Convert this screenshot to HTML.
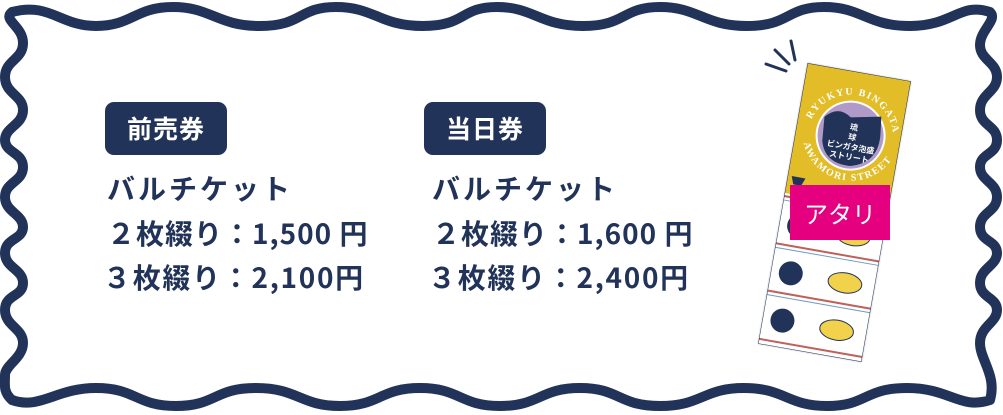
<!DOCTYPE html>
<html><head><meta charset="utf-8"><style>
*{margin:0;padding:0;box-sizing:border-box}
body{width:1003px;height:415px;background:#fff;position:relative;overflow:hidden;font-family:"Liberation Sans","Noto Sans CJK JP",sans-serif;color:#22335a}
.badge{position:absolute;background:#22335a;color:#fff;border-radius:9px;font-family:"Noto Sans CJK JP",sans-serif;font-weight:700;font-size:25px;line-height:53px;text-align:center;letter-spacing:1px}
.t{position:absolute;font-family:"Noto Sans CJK JP",sans-serif;font-weight:700;font-size:28px;line-height:30px;white-space:nowrap;color:#22335a}
</style></head><body>
<svg width="1003" height="415" style="position:absolute;left:0;top:0">
<path fill="none" stroke="#22335a" stroke-width="10" stroke-linejoin="round" d="M12,12 C50,2 60,26 96,26 S135,7 173,7 S217,26 260,26 S298,7 336,7 S380,26 423,26 S460,7 497,7 S540,26 583,26 S622,7 660,7 S704,26 747,26 S786,7 824,7 S867,26 910,26 S960,2 990,12 C998,20 980,30 980,45 S997,62 997,77 S980,94 980,110 S997,125 997,140 S980,153 980,167 S997,182 997,197 S980,212 980,227 S997,240 997,253 S980,268 980,283 S997,297 997,310 S980,326 980,343 S997,375 990,400 C960,410 950,388 907,388 S867,406 827,406 S785,388 744,388 S702,406 660,406 S620,388 580,388 S540,406 500,406 S460,388 420,388 S380,406 340,406 S298,388 256,388 S216,406 176,406 S136,388 96,388 S40,410 12,400 C3,392 5,385 5,375 S23,358 23,343 S5,326 5,310 S23,297 23,283 S5,268 5,253 S23,240 23,227 S5,212 5,197 S23,182 23,167 S5,153 5,140 S23,125 23,110 S5,94 5,77 S23,60 23,43 S2,20 12,12 Z"/>
<g stroke="#22335a" stroke-width="3" stroke-linecap="round">
<line x1="766" y1="64" x2="786" y2="71"/><line x1="775" y1="50" x2="789" y2="64"/><line x1="791" y1="41" x2="795" y2="60"/>
</g>
</svg>

<div class="badge" style="left:105px;top:102px;width:122px;height:53px">前売券</div>
<div class="t" style="left:107px;top:173px;letter-spacing:3px">バルチケット</div>
<div class="t" style="left:107px;top:218px;letter-spacing:1px">２枚綴り：1,500 円</div>
<div class="t" style="left:103px;top:262px;letter-spacing:1.7px">３枚綴り：2,100円</div>

<div class="badge" style="left:424px;top:102px;width:122px;height:53px">当日券</div>
<div class="t" style="left:432px;top:173px;letter-spacing:3px">バルチケット</div>
<div class="t" style="left:432px;top:218px;letter-spacing:1px">２枚綴り：1,600 円</div>
<div class="t" style="left:428px;top:262px;letter-spacing:1.7px">３枚綴り：2,400円</div>

<div style="position:absolute;left:782px;top:70px;width:105px;height:285px;transform:rotate(10deg);box-shadow:0 0 2px rgba(0,0,0,.3)">
<svg width="105" height="285" style="display:block">
<defs><path id="arc" d="M12,66 A43,43 0 0 1 98,66"/><path id="arc2" d="M6,60 A49,49 0 0 0 104,60"/></defs>
<rect width="105" height="285" fill="#fff"/>
<rect width="105" height="132" fill="#e2bd27"/>
<circle cx="55" cy="64" r="35" fill="#fff"/>
<circle cx="55" cy="64" r="33" fill="#b29ac8"/>
<path d="M26,50 Q38,36 52,46 L82,40 L84,56 Q88,86 60,94 Q34,96 28,74 Z" fill="#22335a"/>
<text x="57" y="58" font-size="8" fill="#fff" text-anchor="middle" font-family="Noto Sans CJK JP" font-weight="700">琉</text>
<text x="57" y="68" font-size="8" fill="#fff" text-anchor="middle" font-family="Noto Sans CJK JP" font-weight="700">球</text>
<text x="57" y="78" font-size="8" fill="#fff" text-anchor="middle" font-family="Noto Sans CJK JP" font-weight="700">ビンガタ泡盛</text>
<text x="57" y="88" font-size="8" fill="#fff" text-anchor="middle" font-family="Noto Sans CJK JP" font-weight="700">ストリート</text>
<text font-size="10" fill="#fff" font-weight="700" font-family="Liberation Serif" letter-spacing="1.5"><textPath href="#arc" startOffset="50%" text-anchor="middle">RYUKYU BINGATA</textPath></text>
<text font-size="10" fill="#fff" font-weight="700" font-family="Liberation Serif" letter-spacing="1.5"><textPath href="#arc2" startOffset="50%" text-anchor="middle">AWAMORI STREET</textPath></text>
<path d="M4,114 h14 l-3,8 h-8z M86,114 h14 l-3,8 h-8z" fill="#22335a"/>
<g fill="none" stroke="#c0605a" stroke-width="2">
<line x1="0" y1="135" x2="105" y2="135"/><line x1="0" y1="183" x2="105" y2="183"/><line x1="0" y1="231" x2="105" y2="231"/><line x1="0" y1="280" x2="105" y2="280"/>
</g>
<g stroke="#6a9cc0" stroke-width="1"><line x1="0" y1="139" x2="105" y2="139"/><line x1="0" y1="187" x2="105" y2="187"/><line x1="0" y1="235" x2="105" y2="235"/></g>
<g>
<circle cx="20" cy="162" r="12" fill="#22335a"/><circle cx="20" cy="210" r="12" fill="#22335a"/><circle cx="20" cy="258" r="12" fill="#22335a"/>
<ellipse cx="75" cy="162" rx="17" ry="10" fill="#f2d24a" stroke="#22335a"/><ellipse cx="75" cy="210" rx="17" ry="10" fill="#f2d24a" stroke="#22335a"/><ellipse cx="75" cy="258" rx="17" ry="10" fill="#f2d24a" stroke="#22335a"/>
</g>
<rect x="0" y="0" width="105" height="285" fill="none" stroke="#22335a" stroke-width="1"/>
</svg>
</div>
<div style="position:absolute;left:790px;top:185px;width:100px;height:55px;background:#e4007f;color:#fff;font-family:'Noto Sans CJK JP',sans-serif;font-size:24px;line-height:55px;text-align:center">アタリ</div>
</body></html>
